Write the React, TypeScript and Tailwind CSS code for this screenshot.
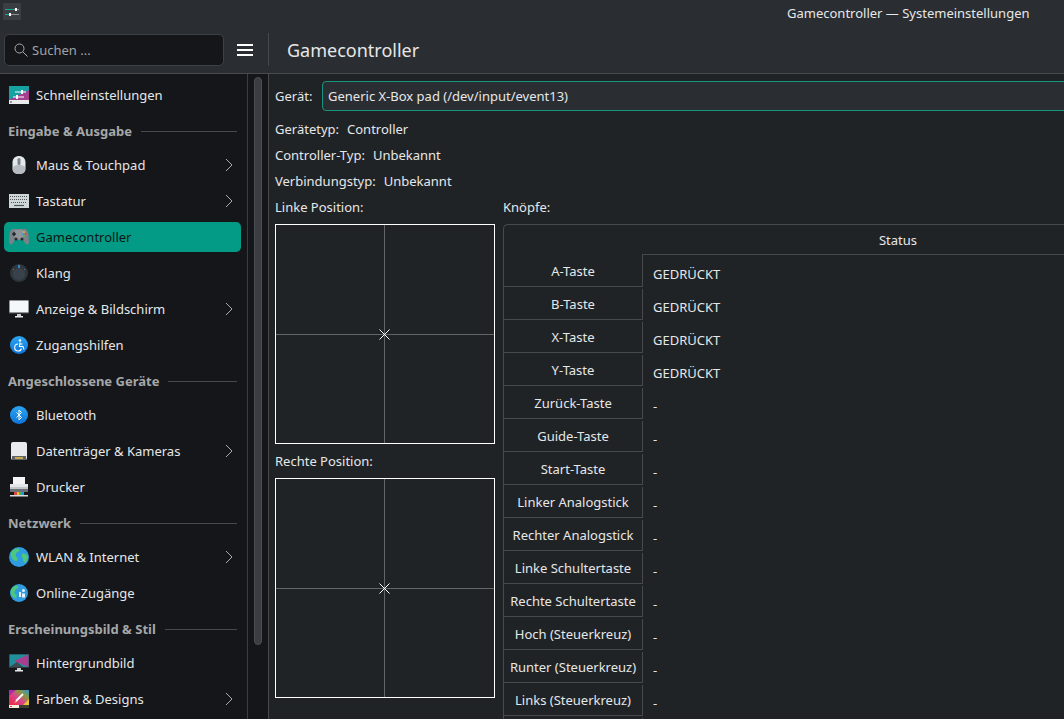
import React from 'react';

const Chevron = () => (
  <svg width="8" height="14" viewBox="0 0 8 14" className="absolute right-[8px] top-[11px]" fill="none" stroke="#a9abad" strokeWidth="1">
    <path d="M1 1l6 6-6 6" />
  </svg>
);

// Breeze style system settings icons
const QuickIcon = () => (
  <svg width="20" height="18" viewBox="0 0 20 18">
    <path d="M0 0h20v14H0z" fill="#1d9aa8" />
    <path d="M0 14L20 4v10z" fill="#a83f8e" />
    <path d="M0 0h20L0 12z" fill="#15a3a0" />
    <rect y="14" width="20" height="4" fill="#e9ebec" />
    <rect x="1" y="15.500" width="2" height="1" fill="#444" />
    <path d="M6 6h11M4 11h11" stroke="#fff" strokeWidth="1" />
    <rect x="12" y="4" width="2" height="4" fill="#fff" />
    <rect x="7" y="9" width="2" height="4" fill="#fff" />
  </svg>
);

const MouseIcon = () => (
  <svg width="20" height="20" viewBox="0 0 20 20">
    <rect x="3.500" y="1" width="13" height="18" rx="6" fill="#e4e8ea" />
    <rect x="3.500" y="10" width="13" height="9" rx="5.500" fill="#b6bcc2" />
    <rect x="8.500" y="3" width="3" height="7" rx="1.500" fill="#7b838a" />
  </svg>
);

const KeyboardIcon = () => (
  <svg width="20" height="14" viewBox="0 0 20 14">
    <rect width="20" height="14" fill="#cfd6d8" />
    <path d="M1 2.500h18M1 5.500h18M2 8.500h16" stroke="#4d5356" strokeWidth="1.200" strokeDasharray="1 1" />
    <path d="M5 11.500h10" stroke="#4d5356" strokeWidth="1.200" />
  </svg>
);

const PadIcon = () => (
  <svg width="20" height="18" viewBox="0 0 20 18">
    <path d="M4 1h12c2 0 3 2 3.500 5l.5 8c0 3-3 3-4 1l-2-3H6l-2 3c-1 2-4 2-4-1l.5-8C1 3 2 1 4 1z" fill="#7a8187" />
    <rect x="6" y="2" width="8" height="9" fill="#8f969b" />
    <path d="M3 6h4M5 4v4" stroke="#24282b" strokeWidth="1.500" />
    <circle cx="15" cy="4" r="1" fill="#e8c33c" />
    <circle cx="17" cy="6" r="1" fill="#d4544c" />
    <circle cx="13" cy="6" r="1" fill="#4aa3df" />
    <circle cx="15" cy="8" r="1" fill="#4cb86b" />
    <circle cx="7" cy="11" r="1.500" fill="#24282b" />
    <circle cx="13" cy="11" r="1.500" fill="#24282b" />
  </svg>
);

const KnobIcon = () => (
  <svg width="18" height="18" viewBox="0 0 18 18">
    <circle cx="9" cy="9" r="9" fill="#2f363c" />
    <circle cx="9" cy="10" r="6" fill="#39424a" />
    <rect x="8.200" y="1" width="1.600" height="3" fill="#2f9be8" />
    <path d="M3 5l1 1M15 5l-1 1" stroke="#6a747c" />
  </svg>
);

const MonitorIcon = ({ wallpaper }: { wallpaper?: boolean }) => (
  <svg width="20" height="18" viewBox="0 0 20 18">
    <rect width="20" height="14" fill="#2f3336" />
    {wallpaper ? (
      <>
        <rect x="0.500" y="0.500" width="19" height="12.500" fill="#1f8f9c" />
        <path d="M5 7L19.500 0.500v12.500z" fill="#a83f8e" />
        <path d="M0.500 13L8 8l6 5z" fill="#3d4a52" />
      </>
    ) : (
      <rect x="0.500" y="0.500" width="19" height="12" fill="#f4f8fa" />
    )}
    <rect x="8" y="14" width="4" height="2" fill="#c7ccd0" />
    <rect x="6" y="16" width="8" height="1.500" fill="#e6e8ea" />
  </svg>
);

const RoundBlue = ({ children }: { children: React.ReactNode }) => (
  <svg width="18" height="18" viewBox="0 0 18 18">
    <defs>
      <linearGradient id="blueDisc" x1="0" y1="0" x2="0" y2="1">
        <stop offset="0" stopColor="#2aa6f2" />
        <stop offset="1" stopColor="#0f74d8" />
      </linearGradient>
    </defs>
    <circle cx="9" cy="9" r="9" fill="url(#blueDisc)" />
    {children}
  </svg>
);

const AccessIcon = () => (
  <RoundBlue>
    <circle cx="10" cy="4.500" r="1.200" fill="#fff" />
    <path d="M10 6.500l-.5 4h3.500l1 3M8 8a3.500 3.500 0 1 0 3.500 4.500M9.500 8h3" fill="none" stroke="#fff" strokeWidth="1.100" />
  </RoundBlue>
);

const BluetoothIcon = () => (
  <RoundBlue>
    <path d="M6.500 6.500l5 5L9 14V4l2.500 2.500-5 5" fill="none" stroke="#fff" strokeWidth="1" />
  </RoundBlue>
);

const DiskIcon = () => (
  <svg width="16" height="18" viewBox="0 0 16 18">
    <rect width="16" height="18" rx="2" fill="#e6eaec" />
    <rect x="1" y="14" width="14" height="4" fill="#5d6367" />
    <rect x="4" y="15" width="8" height="2" fill="#c9a94f" />
  </svg>
);

const PrinterIcon = () => (
  <svg width="20" height="20" viewBox="0 0 20 20">
    <rect x="4" y="0" width="12" height="7" fill="#f2f4f5" />
    <path d="M1 7h18v8H1z" fill="#bfc5c9" />
    <rect x="1" y="7" width="18" height="3" fill="#e3e6e8" />
    <rect x="1" y="12" width="18" height="3" fill="#6b7277" />
    <path d="M5 15h3v3H5z" fill="#e0483e" />
    <path d="M8 15h2v3H8z" fill="#ecc32f" />
    <path d="M10 15h2v3h-2z" fill="#45b865" />
    <path d="M12 15h3v3h-3z" fill="#2f8fe0" />
    <rect x="1" y="18" width="18" height="1.500" fill="#d8dcde" />
  </svg>
);

const GlobeIcon = () => (
  <svg width="20" height="20" viewBox="0 0 20 20">
    <circle cx="10" cy="10" r="10" fill="#2f9be0" />
    <path d="M3 4c2-2 5-3 7-2 1 1 0 3-2 3-1 2-2 3-1 5 2 0 2 2 1 4-3 0-5-2-6-5-1-2 0-4 1-5zM13 7c2-1 4 0 6 2 0 3-1 5-3 7-2-1-2-3-2-4-1-2-2-3-1-5z" fill="#4cc77c" />
  </svg>
);

const OnlineIcon = () => (
  <svg width="18" height="18" viewBox="0 0 18 18">
    <circle cx="9" cy="9" r="9" fill="#2f9be0" />
    <path d="M2 4c2-2 5-3 6-2 1 1 0 3-2 3-1 2-2 3-1 5 2 0 2 2 1 4-3 0-4-2-5-4-1-2 0-4 1-6z" fill="#4cc77c" />
    <circle cx="13.500" cy="6.500" r="1.500" fill="#e8f4fb" />
    <path d="M9 8h2v5H9zM12 9.500h3v4h-3z" fill="#e8f4fb" />
  </svg>
);

const ColorsIcon = () => (
  <svg width="20" height="18" viewBox="0 0 20 18">
    <defs>
      <linearGradient id="rainbow" x1="0" y1="1" x2="1" y2="0">
        <stop offset="0" stopColor="#f0263c" />
        <stop offset="0.450" stopColor="#d9468e" />
        <stop offset="0.700" stopColor="#8a9a3c" />
        <stop offset="1" stopColor="#2f8fd8" />
      </linearGradient>
    </defs>
    <rect width="20" height="15" fill="url(#rainbow)" />
    <path d="M0 6L7 0H0z" fill="#b02aa8" />
    <path d="M14 15l6-6v6z" fill="#e8c33c" />
    <path d="M7 11l7-7" stroke="#fff" strokeWidth="1.800" />
    <path d="M5 13l2-2 1 1z" fill="#f2d24a" />
    <rect y="15" width="10" height="3" fill="#f1eee0" />
    <rect x="10" y="15" width="10" height="3" fill="#3c3f33" />
    <rect x="1" y="16" width="2" height="1" fill="#d04a3c" />
  </svg>
);

const AppIcon = () => (
  <svg width="18" height="17" viewBox="0 0 18 17">
    <rect width="18" height="17" rx="1" fill="#3b3f44" />
    <path d="M2 6.500h9M2 11.500h4" stroke="#14a594" strokeWidth="1" />
    <path d="M11 6.500h5M6 11.500h10" stroke="#8d9195" strokeWidth="1" />
    <rect x="12" y="5" width="2" height="3" fill="#fff" />
    <rect x="6" y="10" width="2" height="3" fill="#fff" />
  </svg>
);

function SidebarItem({ icon, label, arrow, active }: { icon: React.ReactNode; label: string; arrow?: boolean; active?: boolean }) {
  return (
    <div className="py-[3px]">
      <div className={`relative flex h-[30px] items-center rounded-[5px] ${active ? 'bg-[#039b85] text-[#0b1614]' : 'text-[#e6e7e8]'}`}>
        <div className="flex w-[32px] shrink-0 justify-center pr-[2px]">{icon}</div>
        <span className="pt-[2px]">{label}</span>
        {arrow && <div className="absolute right-0 top-[-3px] h-9 w-[16px]"><Chevron /></div>}
      </div>
    </div>
  );
}

function SectionTitle({ label }: { label: string }) {
  return (
    <div className="flex h-[34px] items-center gap-[9px] pl-[4px] pr-[4px] pt-[2px]">
      <span className="pt-[2px] font-bold text-[#a5a7a9]">{label}</span>
      <div className="h-px flex-1 bg-[#46494d]" />
    </div>
  );
}

function PositionBox() {
  return (
    <div className="relative h-[220px] w-[220px] border border-white">
      <div className="absolute bottom-0 left-[108px] top-0 w-px bg-[#62656a]" />
      <div className="absolute left-0 right-0 top-[109px] h-px bg-[#62656a]" />
      <svg width="11" height="11" viewBox="0 0 11 11" className="absolute left-[103px] top-[104px]" stroke="#fff" strokeWidth="1">
        <path d="M0.500 0.500l10 10M10.500 0.500l-10 10" />
      </svg>
    </div>
  );
}

const buttons: [string, string][] = [
  ['A-Taste', 'GEDRÜCKT'],
  ['B-Taste', 'GEDRÜCKT'],
  ['X-Taste', 'GEDRÜCKT'],
  ['Y-Taste', 'GEDRÜCKT'],
  ['Zurück-Taste', '-'],
  ['Guide-Taste', '-'],
  ['Start-Taste', '-'],
  ['Linker Analogstick', '-'],
  ['Rechter Analogstick', '-'],
  ['Linke Schultertaste', '-'],
  ['Rechte Schultertaste', '-'],
  ['Hoch (Steuerkreuz)', '-'],
  ['Runter (Steuerkreuz)', '-'],
  ['Links (Steuerkreuz)', '-'],
  ['', ''],
];

export default function App() {
  return (
    <div className="flex h-[719px] w-[1064px] flex-col overflow-hidden bg-[#202326] font-['Noto_Sans',sans-serif] text-[13px] text-[#e6e7e8]">
      {/* Header */}
      <header className="h-[74px] shrink-0 border-b border-[#47494d] bg-[#2a2e32]">
        <div className="relative h-[33px]">
          <div className="absolute left-[3px] top-[3px]">
            <AppIcon />
          </div>
          <div className="whitespace-nowrap pl-[787px] pt-[3px] leading-[20px]">Gamecontroller — Systemeinstellungen</div>
        </div>
        <div className="flex h-[33px] items-center">
          <div className="ml-[4px] flex h-[32px] w-[220px] items-center rounded-[5px] border border-[#3d4044] bg-[#141619] pl-[9px] text-[#a0a3a6]">
            <svg width="14" height="14" viewBox="0 0 14 14" fill="none" stroke="#a9abad" strokeWidth="1" className="mr-[4px]">
              <circle cx="5.500" cy="5.500" r="4.500" />
              <path d="M9 9l4.500 4.500" />
            </svg>
            <span className="pt-[2px]">Suchen ...</span>
          </div>
          <div className="ml-[13px] flex h-[12px] w-[16px] flex-col justify-between">
            <div className="h-[2px] bg-white" />
            <div className="h-[2px] bg-white" />
            <div className="h-[2px] bg-white" />
          </div>
          <div className="ml-[15px] h-[33px] w-px bg-[#47494d]" />
          <div className="ml-[18px] text-[18px] leading-[24px]">Gamecontroller</div>
        </div>
      </header>

      <div className="flex min-h-0 flex-1">
        {/* Sidebar */}
        <aside className="flex w-[269px] shrink-0 border-r border-[#47494d] bg-[#141619]">
          <div className="w-[248px] shrink-0 border-r border-[#3a3d41] py-[3px] pl-[4px] pr-[6px]">
            <SidebarItem icon={<QuickIcon />} label="Schnelleinstellungen" />
            <SectionTitle label="Eingabe & Ausgabe" />
            <SidebarItem icon={<MouseIcon />} label="Maus & Touchpad" arrow />
            <SidebarItem icon={<KeyboardIcon />} label="Tastatur" arrow />
            <SidebarItem icon={<PadIcon />} label="Gamecontroller" active />
            <SidebarItem icon={<KnobIcon />} label="Klang" />
            <SidebarItem icon={<MonitorIcon />} label="Anzeige & Bildschirm" arrow />
            <SidebarItem icon={<AccessIcon />} label="Zugangshilfen" />
            <SectionTitle label="Angeschlossene Geräte" />
            <SidebarItem icon={<BluetoothIcon />} label="Bluetooth" />
            <SidebarItem icon={<DiskIcon />} label="Datenträger & Kameras" arrow />
            <SidebarItem icon={<PrinterIcon />} label="Drucker" />
            <SectionTitle label="Netzwerk" />
            <SidebarItem icon={<GlobeIcon />} label="WLAN & Internet" arrow />
            <SidebarItem icon={<OnlineIcon />} label="Online-Zugänge" />
            <SectionTitle label="Erscheinungsbild & Stil" />
            <SidebarItem icon={<MonitorIcon wallpaper />} label="Hintergrundbild" />
            <SidebarItem icon={<ColorsIcon />} label="Farben & Designs" arrow />
          </div>
          <div className="flex-1 pl-[6px] pt-[3px]">
            <div className="h-[568px] w-[8px] rounded-full border border-[#4a4d51] bg-[#3a3d41]" />
          </div>
        </aside>

        {/* Content */}
        <main className="min-w-0 flex-1 overflow-hidden pl-[6px] pt-[7px]">
          <div className="flex h-[30px] items-center">
            <span className="w-[47px] shrink-0 pt-[2px]">Gerät:</span>
            <div className="flex h-[30px] w-[900px] shrink-0 items-center rounded-[4px] border border-[#17947f] bg-[#2a2e32] pl-[5px] pt-[2px]">
              Generic X-Box pad (/dev/input/event13)
            </div>
          </div>
          <div className="mt-[5px] flex h-[26px] items-center gap-[8px] pt-[2px]"><span>Gerätetyp:</span><span>Controller</span></div>
          <div className="flex h-[26px] items-center gap-[8px] pt-[2px]"><span>Controller-Typ:</span><span>Unbekannt</span></div>
          <div className="flex h-[26px] items-center gap-[8px] pt-[2px]"><span>Verbindungstyp:</span><span>Unbekannt</span></div>

          <div className="flex gap-[8px]">
            <div className="w-[220px] shrink-0">
              <div className="flex h-[26px] items-center pt-[2px]">Linke Position:</div>
              <div className="mt-[4px]"><PositionBox /></div>
              <div className="flex h-[34px] items-center pt-[2px]">Rechte Position:</div>
              <PositionBox />
            </div>
            <div className="w-[650px] shrink-0">
              <div className="flex h-[26px] items-center pt-[2px]">Knöpfe:</div>
              <div className="mt-[4px] rounded-tl-[5px] border-l border-t border-[#47494d]">
                <div className="flex h-[29px] items-center pl-[139px] pt-[2px]">
                  <div className="flex-1 text-center">Status</div>
                </div>
                {buttons.map(([name, state], i) => (
                  <div key={i} className="flex h-[33px]">
                    <div className="flex w-[139px] shrink-0 flex-col border-b border-[#47494d]">
                      <div className={`flex flex-1 items-center justify-center border-r border-[#47494d] ${i === 0 ? 'pt-[4px]' : 'mt-[2px] pt-[2px]'}`}>{name}</div>
                    </div>
                    <div className={`flex-1 pl-[10px] leading-[18px] ${i === 0 ? 'border-t border-[#47494d] pt-[10px]' : 'pt-[11px]'}`}>{state}</div>
                  </div>
                ))}
              </div>
            </div>
          </div>
        </main>
      </div>
    </div>
  );
}
